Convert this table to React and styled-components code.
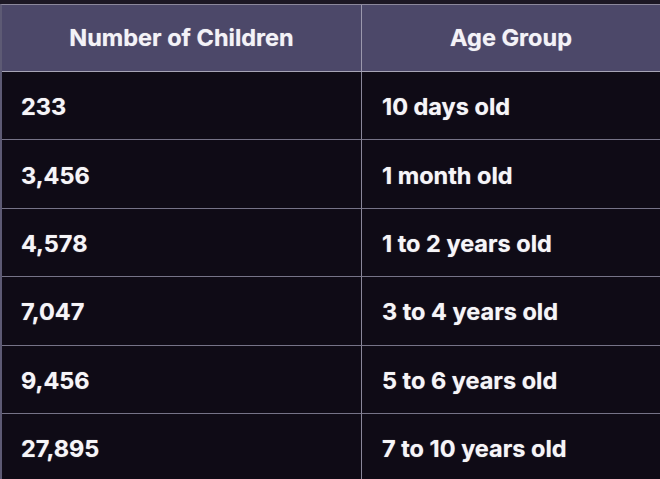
import React from "react";
import styled, { createGlobalStyle } from "styled-components";

const GlobalStyle = createGlobalStyle`
  html, body {
    margin: 0;
    padding: 0;
    background: #0f0b16;
    overflow: hidden;
  }
  body {
    font-family: Inter, "Noto Sans", "Liberation Sans", sans-serif;
  }
`;

const Page = styled.div`
  width: 660px;
  height: 479px;
  padding-top: 4px;
  box-sizing: border-box;
  background: linear-gradient(#1c1724 0 4px, #0f0b16 4px);
`;

const Table = styled.div`
  display: grid;
  grid-template-columns: 360px 1fr;
  border-top: 1px solid #8c889c;
  border-left: 2px solid #5d5a74;
`;

const HeadCell = styled.div`
  height: 67px;
  box-sizing: border-box;
  display: flex;
  align-items: center;
  justify-content: center;
  padding-bottom: 2px;
  background: #4c4869;
  border-bottom: 1px solid #a7a4b6;
  border-right: ${(p) => (p.last ? "none" : "1px solid #9b98ad")};
  color: #f3f2f7;
  font-size: 23.5px;
  font-weight: 700;
  text-shadow: 0 0 1px rgba(255, 255, 255, 0.5);
`;

const Cell = styled.div`
  height: 68.4px;
  box-sizing: border-box;
  display: flex;
  align-items: center;
  padding-left: ${(p) => (p.last ? "20px" : "19px")};
  padding-top: 2px;
  background: #0f0b16;
  border-bottom: 1px solid #767387;
  border-right: ${(p) => (p.last ? "none" : "1px solid #8a879a")};
  color: #f6f5f8;
  font-size: 23.5px;
  font-weight: 700;
  text-shadow: 0 0 1px rgba(255, 255, 255, 0.5);
`;

const rows = [
  ["233", "10 days old"],
  ["3,456", "1 month old"],
  ["4,578", "1 to 2 years old"],
  ["7,047", "3 to 4 years old"],
  ["9,456", "5 to 6 years old"],
  ["27,895", "7 to 10 years old"],
];

export default function App() {
  return (
    <>
      <GlobalStyle />
      <Page>
        <Table>
          <HeadCell>Number of Children</HeadCell>
          <HeadCell last>Age Group</HeadCell>
          {rows.map(([count, age]) => (
            <React.Fragment key={count}>
              <Cell>{count}</Cell>
              <Cell last>{age}</Cell>
            </React.Fragment>
          ))}
        </Table>
      </Page>
    </>
  );
}
